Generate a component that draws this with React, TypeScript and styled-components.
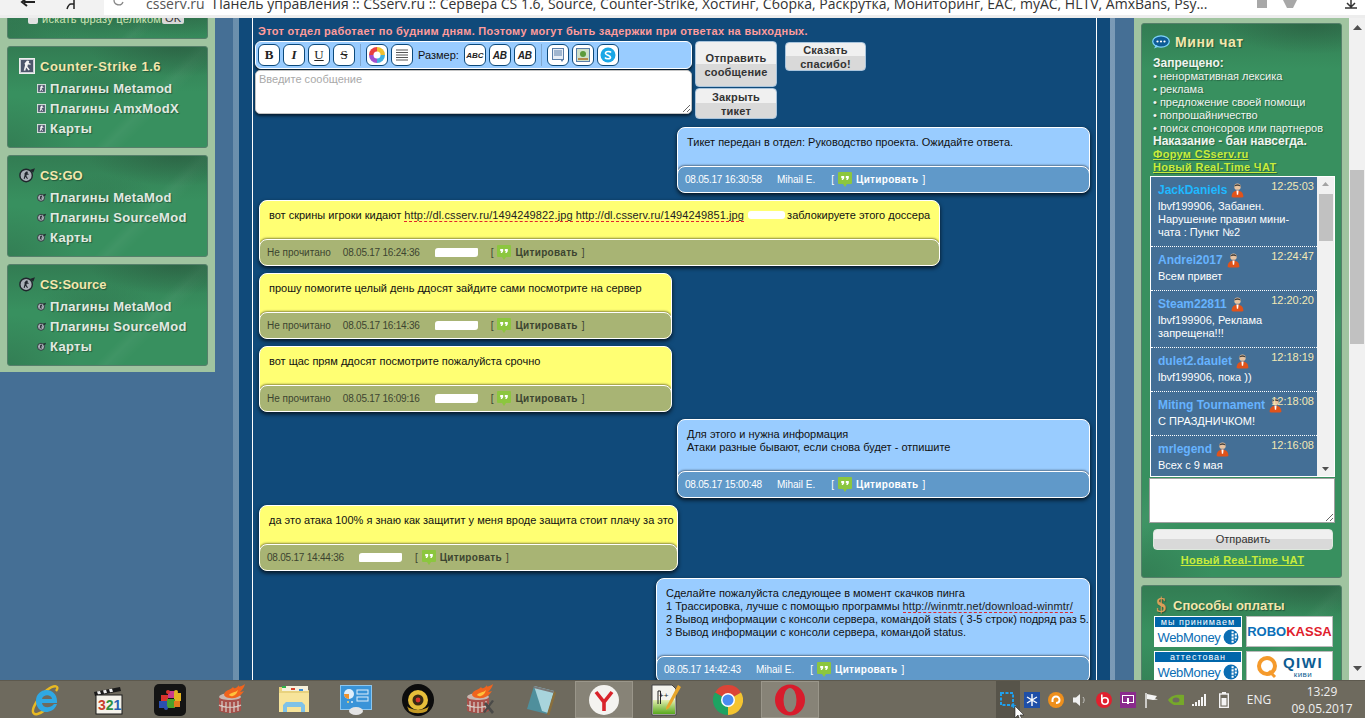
import React from "react";
import styled, { createGlobalStyle } from "styled-components";

const GlobalStyle = createGlobalStyle`
  html, body { margin: 0; padding: 0; height: 718px; overflow: hidden; }
  body { font-family: "Liberation Sans", Arial, sans-serif; font-size: 11px; }
  * { box-sizing: border-box; }
`;

const Screen = styled.div`
  display: flex;
  flex-direction: column;
  width: 1365px;
  height: 718px;
  overflow: hidden;
`;

/* browser bar */
const BrowserBar = styled.div`
  display: flex;
  height: 18px;
  flex: none;
  background: #f2f2f2;
  border-bottom: 3px solid #ededed;
  overflow: hidden;
`;
const NavButtons = styled.div`
  display: flex;
  width: 104px;
  flex: none;
  padding-left: 20px;
  gap: 29px;
`;
const AddressBar = styled.div`
  display: flex;
  flex: 1;
  height: 15px;
  background: #fff;
  padding-left: 8px;
  font-family: "Open Sans", sans-serif;
  font-size: 14px;
  line-height: 8px;
  color: #333;
  white-space: nowrap;
`;
const Domain = styled.span`
  margin-left: 22px;
  margin-right: 8px;
  color: #555;
`;
const PageTitle = styled.span`
  width: 1000px;
  overflow: hidden;
`;
const BarTools = styled.div`
  display: flex;
  margin-left: 42px;
  gap: 14px;
`;

/* page */
const Viewport = styled.div`
  display: flex;
  flex: 1;
  min-height: 0;
  overflow: hidden;
`;
const Page = styled.div`
  display: grid;
  grid-template-columns: 215px 18px 882px 19px 215px;
  width: 1349px;
  align-items: start;
  height: 662px;
  background: #456f95;
`;

const LeftColumn = styled.aside`
  grid-column: 1;
  display: flex;
  flex-direction: column;
  gap: 7px;
  margin-top: -12px;
  padding: 0 7px 6px;
  background: #a0c4a0;
`;
const RightColumn = styled.aside`
  grid-column: 5;
  display: flex;
  flex-direction: column;
  gap: 7px;
  padding: 5px 7px 0;
  min-height: 662px;
  background: #a0c4a0;
`;
const Panel = styled.section`
  border-radius: 3px;
  border: 1px solid #55806a;
  background:
    radial-gradient(ellipse 90px 30px at 85% 0, rgba(40, 85, 60, 0.55), transparent),
    radial-gradient(ellipse 70px 50px at 0 100%, rgba(40, 85, 60, 0.3), transparent),
    radial-gradient(ellipse 60px 24px at 45% 42%, rgba(40, 85, 60, 0.25), transparent),
    linear-gradient(135deg, rgba(255, 255, 255, 0) 62%, rgba(255, 255, 255, 0.04) 66%, rgba(255, 255, 255, 0) 72%),
    linear-gradient(180deg, rgba(44, 100, 68, 0.45), rgba(56, 144, 95, 0) 45px),
    #38905f;
`;
const SearchPanel = styled(Panel)`
  display: flex;
  align-items: center;
  height: 33px;
  padding: 5px 0 13px 20px;
  color: #cfe5b4;
  letter-spacing: 0.25px;
`;
const SearchCheck = styled.span`
  width: 10px;
  height: 10px;
  margin-right: 4px;
  background: #e2e2e2;
  border-radius: 2px;
`;
const SearchOk = styled.span`
  width: 22px;
  height: 11px;
  margin-left: 1px;
  background: #d8d8d8;
  border-radius: 2px;
  color: #333;
  line-height: 11px;
  text-align: center;
`;
const MenuPanel = styled(Panel)`
  height: 102px;
  padding: 11px 0 0 11px;
`;
const PanelTitle = styled.div<{ $spread?: number }>`
  display: flex;
  align-items: center;
  gap: 5px;
  height: 16px;
  font-size: 13px;
  font-weight: bold;
  letter-spacing: ${(p) => p.$spread ?? 0}px;
  color: #f2e7ad;
  text-shadow: 1px 1px 1px rgba(0, 0, 0, 0.35);
`;
const MenuList = styled.div`
  margin-top: 4px;
`;
const MenuItem = styled.div`
  display: flex;
  align-items: center;
  gap: 4px;
  height: 20px;
  padding-left: 18px;
  font-size: 13px;
  font-weight: bold;
  letter-spacing: 0.3px;
  color: #e1eae2;
  text-shadow: 1px 1px 1px rgba(0, 0, 0, 0.35);
`;

/* centre */
const CentreOuter = styled.main`
  grid-column: 3;
  height: 662px;
  padding: 0 5px 0 6px;
  background: linear-gradient(90deg, #6b8fac, #cfd9e1 50%, #7a9ab6);
`;
const CentreInner = styled.div`
  height: 100%;
  padding: 0 13px;
  background: #104a7a;
`;
const Column = styled.div`
  height: 100%;
  padding: 7px 6px 0 2px;
  border-left: 1px solid #fff;
  border-right: 1px solid #fff;
`;
const Notice = styled.div`
  padding-left: 3px;
  line-height: 13px;
  font-weight: bold;
  letter-spacing: 0.3px;
  color: #ff9c9c;
`;
const ComposerRow = styled.div`
  display: flex;
  align-items: flex-start;
  margin-top: 3px;
  gap: 3px;
`;
const Editor = styled.div`
  display: flex;
  flex-direction: column;
  width: 437px;
`;
const Toolbar = styled.div`
  display: flex;
  align-items: center;
  height: 28px;
  padding-left: 2px;
  gap: 3px;
  background: #99ccff;
  border: 1px solid #fff;
  border-radius: 6px;
  box-shadow: 0 2px 3px rgba(0, 0, 0, 0.7);
  font-size: 11px;
  color: #111;
`;
const ToolButton = styled.span`
  display: flex;
  align-items: center;
  justify-content: center;
  width: 22px;
  height: 22px;
  background: #fff;
  border: 1px solid #0c4a7c;
  border-radius: 6px;
  font-family: "Liberation Serif", serif;
  font-size: 13px;
  color: #222;
`;
const ToolSize = styled(ToolButton)<{ $heavy?: boolean }>`
  font-family: "Liberation Sans", sans-serif;
  font-size: ${(p) => (p.$heavy ? "10px" : "8px")};
  font-weight: bold;
  font-style: italic;
`;
const ToolDivider = styled.span`
  width: 1px;
  height: 22px;
  margin: 0 2px;
  background: #7fa8d0;
`;
const SizeLabel = styled.span`
  margin: 0 2px;
`;
const MessageInput = styled.textarea`
  display: block;
  width: 100%;
  height: 44px;
  margin-top: 1px;
  padding: 2px 3px;
  background: #fff;
  border: 1px solid #c4c4c4;
  border-radius: 5px;
  outline: none;
  font-family: "Liberation Sans", sans-serif;
  font-size: 11px;
  box-shadow: 0 2px 3px rgba(0, 0, 0, 0.6);
  &::placeholder { color: #a9a9a9; }
`;
const ActionStack = styled.div`
  display: flex;
  flex-direction: column;
  gap: 1px;
  width: 82px;
`;
const ActionButton = styled.div<{ $height: number }>`
  display: flex;
  align-items: center;
  justify-content: center;
  height: ${(p) => p.$height}px;
  padding-top: 1px;
  border: 1px solid #a9c4dc;
  border-radius: 4px;
  background: linear-gradient(180deg, #f0f0f0 50%, #d9d9d9 50%);
  font-size: 11px;
  line-height: 14px;
  font-weight: bold;
  letter-spacing: 0.2px;
  text-align: center;
  color: #333;
`;
const ThanksButton = styled(ActionButton)`
  width: 81px;
  margin-left: 5px;
  margin-top: 1px;
`;

const MessageList = styled.div`
  display: flex;
  flex-direction: column;
  gap: 7px;
  margin-top: 8px;
  padding-left: 4px;
`;
const Message = styled.article<{ $own: boolean; $width: number }>`
  display: flex;
  flex-direction: column;
  flex: none;
  width: ${(p) => p.$width}px;
  align-self: ${(p) => (p.$own ? "flex-end" : "flex-start")};
  background: ${(p) => (p.$own ? "#99ccff" : "#ffff73")};
  border: 1px solid #fff;
  border-radius: 8px;
  box-shadow: 0 2px 4px rgba(0, 0, 0, 0.75);
  overflow: hidden;
`;
const MessageBody = styled.div`
  padding: 8px 0 17px 9px;
  line-height: 13px;
  white-space: nowrap;
  color: #111;
`;
const MessageLink = styled.span`
  border-bottom: 1px dashed #e0262c;
  letter-spacing: 0.1px;
  color: #222;
`;
const MessageFoot = styled.div<{ $own: boolean }>`
  display: flex;
  align-items: center;
  height: 27px;
  margin: 0 -1px -1px;
  padding: 0 7px;
  border: 1px solid #fff;
  border-radius: 8px;
  background: ${(p) => (p.$own ? "#6099c9" : "#a8b474")};
  box-shadow: 0 -1px 2px rgba(0, 0, 0, 0.45);
  font-size: 10px;
  white-space: nowrap;
  color: ${(p) => (p.$own ? "#fff" : "#3c4430")};
`;
const FootText = styled.span<{ $gap: number }>`
  margin-right: ${(p) => p.$gap}px;
`;
const FootTime = styled(FootText)`
  letter-spacing: -0.22px;
`;
const HiddenName = styled.span`
  width: 43px;
  height: 9px;
  margin-right: 13px;
  background: #fff;
  border-radius: 3px 1px 3px 1px;
`;
const InlineBlot = styled.span`
  display: inline-block;
  width: 37px;
  height: 8px;
  margin: 0 -1px 0 1px;
  background: #fff;
  border-radius: 3px;
`;
const QuoteLink = styled.span`
  display: flex;
  align-items: center;
  gap: 4px;
  b {
    font-weight: bold;
    letter-spacing: 0.3px;
  }
`;

/* chat */
const ChatPanel = styled(Panel)`
  display: flex;
  flex-direction: column;
  padding: 10px 6px 10px 8px;
`;
const ChatRules = styled.div`
  margin-top: 7px;
  padding-left: 3px;
  line-height: 13px;
  color: #f0f5f0;
  text-shadow: 1px 1px 1px rgba(0, 0, 0, 0.3);
`;
const RuleHeading = styled.div`
  font-size: 12px;
  font-weight: bold;
`;
const GreenLink = styled.a`
  display: block;
  font-weight: bold;
  line-height: 13px;
  letter-spacing: 0.3px;
  color: #c8ec3c;
  text-decoration: underline;
`;
const CentredLink = styled(GreenLink)`
  margin-top: 4px;
  text-align: center;
`;
const ChatHeading = styled(PanelTitle)`
  padding-left: 2px;
  font-size: 14px;
`;
const ChatBox = styled.div`
  display: flex;
  height: 301px;
  margin-top: 2px;
  background: #446f96;
  border: 1px solid #fff;
  overflow: hidden;
`;
const ChatList = styled.div`
  flex: 1;
  min-width: 0;
`;
const ChatItem = styled.div`
  position: relative;
  padding: 6px 0 7px 7px;
  border-bottom: 1px dotted #fff;
  line-height: 13px;
  color: #fff;
`;
const ChatName = styled.div<{ $color: string }>`
  display: flex;
  align-items: center;
  gap: 4px;
  height: 14px;
  margin-bottom: 3px;
  font-size: 12px;
  font-weight: bold;
  color: ${(p) => p.$color};
`;
const ChatTime = styled.span`
  position: absolute;
  top: 3px;
  right: 3px;
  color: #f2e8b4;
`;
const ChatScroll = styled.div`
  display: flex;
  flex-direction: column;
  align-items: center;
  justify-content: space-between;
  width: 17px;
  padding: 5px 0;
  background: #f1f1f1;
`;
const ChatThumbWrap = styled.div`
  flex: 1;
  width: 14px;
  padding-top: 8px;
`;
const ChatThumb = styled.div`
  width: 14px;
  height: 47px;
  background: #c1c1c1;
`;
const ChatInput = styled.textarea`
  display: block;
  width: 186px;
  height: 45px;
  margin: 1px 0 0 -1px;
  border: 1px solid #a0a0a0;
  background: #fff;
  outline: none;
`;
const SendButton = styled.div`
  width: 180px;
  height: 21px;
  margin: 6px 0 0 3px;
  border-radius: 4px;
  border: 1px solid #dfe8df;
  background: linear-gradient(180deg, #f0f0f0 50%, #d9d9d9 50%);
  line-height: 19px;
  text-align: center;
  color: #333;
`;

/* payments */
const PayPanel = styled(Panel)`
  padding: 11px 0 0 12px;
  height: 110px;
`;
const DollarMark = styled.span`
  width: 14px;
  padding-left: 2px;
  font-family: "Liberation Serif", serif;
  font-size: 20px;
  line-height: 18px;
  color: #d9a05a;
`;
const PayGrid = styled.div`
  display: grid;
  grid-template-columns: 88px 87px;
  gap: 4px;
  margin-top: 3px;
`;
const PayCard = styled.div`
  display: flex;
  flex-direction: column;
  height: 31px;
  background: #fff;
  overflow: hidden;
`;
const PayHeader = styled.div`
  margin: 1px 1px 0;
  height: 10px;
  background: #0066aa;
  color: #fff;
  font-size: 9px;
  line-height: 10px;
  letter-spacing: 1px;
  text-align: center;
`;
const WebMoneyRow = styled.div`
  display: flex;
  align-items: center;
  justify-content: center;
  gap: 2px;
  flex: 1;
  font-size: 13px;
  letter-spacing: -0.3px;
  color: #0a6db3;
`;
const RoboCard = styled(PayCard)`
  align-items: center;
  justify-content: center;
  border: 1px solid #bbb;
  font-size: 13px;
  font-weight: bold;
  color: #0b6fb8;
  em { color: #e0202c; font-style: normal; }
`;
const QiwiCard = styled(RoboCard)`
  flex-direction: row;
  gap: 5px;
`;
const QiwiMark = styled.div`
  font-size: 15px;
  line-height: 15px;
  letter-spacing: 1.5px;
  text-align: center;
  color: #0d5c92;
`;
const QiwiCaption = styled.div`
  font-size: 8px;
  line-height: 9px;
  font-weight: normal;
  letter-spacing: 0.5px;
`;

/* page scrollbar */
const PageScroll = styled.div`
  display: flex;
  flex-direction: column;
  align-items: center;
  width: 16px;
  height: 662px;
  padding-top: 7px;
  background: #f1f1f1;
`;
const PageThumb = styled.div`
  width: 14px;
  height: 174px;
  margin-top: 140px;
  margin-bottom: auto;
  background: #c1c1c1;
`;
const PageScrollEnd = styled.div`
  margin-bottom: 7px;
`;

/* taskbar */
const Taskbar = styled.footer`
  display: flex;
  align-items: center;
  flex: none;
  height: 38px;
  padding-left: 15px;
  background: #6e6a5e;
  border-top: 1px solid #5d594e;
  color: #f0f0f0;
`;
const TaskSlot = styled.div<{ $active?: boolean }>`
  display: flex;
  align-items: center;
  justify-content: center;
  width: 58px;
  height: 37px;
  margin: 0 2px;
  background: ${(p) => (p.$active ? "#878377" : "transparent")};
  border: ${(p) => (p.$active ? "1px solid #9a968a" : "none")};
`;
const Tray = styled.div`
  display: flex;
  align-items: center;
  margin-left: auto;
  height: 100%;
`;
const TraySlot = styled.div<{ $active?: boolean }>`
  position: relative;
  display: flex;
  align-items: center;
  justify-content: center;
  width: 24px;
  height: 37px;
  background: ${(p) => (p.$active ? "#57544a" : "transparent")};
`;
const CursorMark = styled.svg`
  position: absolute;
  left: 18px;
  top: 25px;
`;
const TrayLang = styled.span`
  width: 44px;
  margin-left: 1px;
  font-family: "Open Sans", sans-serif;
  font-size: 12px;
  text-align: center;
`;
const Clock = styled.div`
  width: 72px;
  margin: 0 7px 0 5px;
  font-family: "Open Sans", sans-serif;
  font-size: 12px;
  line-height: 17px;
  text-align: center;
`;

/* ---------- drawings ---------- */

const CsIcon = ({ size }: { size: number }) => (
  <svg width={size} height={size} viewBox="0 0 16 16">
    <rect x="0.5" y="0.5" width="15" height="15" fill="#c9cdd4" stroke="#eee" />
    <rect x="2" y="2" width="12" height="12" fill="#4d566b" />
    <path d="M8 2.500l2.200.4-.4 2.200 2 .6-.3 1-2.600-.2-.5 2 2.400 3.200-1.300.8-2.300-3-.9 3.200-1.600-.3 1.400-5.400-.6-1.400z" fill="#f4f4f4" />
  </svg>
);

const SourceIcon = ({ size }: { size: number }) => (
  <svg width={size} height={size} viewBox="0 0 18 17">
    <circle cx="8" cy="9" r="7" fill="#aab0b8" stroke="#20252c" strokeWidth="1.600" />
    <path d="M12 3l6-2-2 5z" fill="#20252c" />
    <path d="M8 4.500l2 .4-.4 2 1.400.5-.3.9-2-.2-.4 1.600 1.800 2.600-1 .6-1.900-2.400-.8 2.500-1.200-.3 1.200-4.400-.4-1.200z" fill="#20252c" />
  </svg>
);

const ChatBubbleIcon = () => (
  <svg width="18" height="14" viewBox="0 0 18 14">
    <ellipse cx="9" cy="6.500" rx="8.300" ry="5.600" fill="#0f5c96" stroke="#7fd4ff" strokeWidth="1.200" />
    <path d="M4 10l-2 3.500 5-2z" fill="#7fd4ff" />
    <circle cx="5.500" cy="6.500" r="1.100" fill="#fff" />
    <circle cx="9" cy="6.500" r="1.100" fill="#fff" />
    <circle cx="12.500" cy="6.500" r="1.100" fill="#fff" />
  </svg>
);

const QuoteIcon = () => (
  <svg width="14" height="15" viewBox="0 0 14 15">
    <path d="M1 0h12a1 1 0 0 1 1 1v10a1 1 0 0 1-1 1H9l-2 3-2-3H1a1 1 0 0 1-1-1V1a1 1 0 0 1 1-1z" fill="#8cc63f" />
    <path d="M3.200 4h3v2.200L5 8H3.600l.8-1.800H3.200zM7.800 4h3v2.200L9.600 8H8.200L9 6.200H7.800z" fill="#fff" />
  </svg>
);

const UserIcon = () => (
  <svg width="13" height="15" viewBox="0 0 12 14">
    <circle cx="6" cy="3.400" r="3" fill="#e9c3a0" />
    <path d="M3 3.200c0-2.600 6-2.600 6 0-2-1-4-1-6 0z" fill="#43403c" />
    <path d="M0.500 13c0-4 2.500-6 5.500-6s5.500 2 5.500 6c0 .8-11 .8-11 0z" fill="#e0531b" />
    <path d="M5 7h2l-.4 4h-1.200z" fill="#fff" />
  </svg>
);

const ArrowUp = () => (
  <svg width="9" height="5" viewBox="0 0 9 5"><path d="M0 5l4.500-5 4.500 5z" fill="#505050" /></svg>
);
const ArrowDown = () => (
  <svg width="9" height="5" viewBox="0 0 9 5"><path d="M0 0l4.500 5 4.500-5z" fill="#505050" /></svg>
);
const ChatArrow = ({ up }: { up?: boolean }) => (
  <svg width="7" height="4" viewBox="0 0 7 4"><path d={up ? "M0 4l3.500-4 3.500 4z" : "M0 0l3.500 4 3.500-4z"} fill={up ? "#a3a3a3" : "#505050"} /></svg>
);

const GlobeIcon = () => (
  <svg width="16" height="16" viewBox="0 0 15 15">
    <circle cx="7.500" cy="7.500" r="7" fill="#0a6db3" />
    <path d="M8 2h2v2H8zM11 4h2v2h-2zM8 5h2v2H8zM11 7h2v2h-2zM8 8h2v2H8zM11 10h1v1h-1zM8 11h2v2H8z" fill="#fff" />
  </svg>
);

const IeIcon = () => (
  <svg width="32" height="32" viewBox="0 0 32 32">
    <path d="M26 7C30 2 25 0 17 6 9 12 2 24 3 28c1 4 7 2 12-2" fill="none" stroke="#e8b923" strokeWidth="2.400" />
    <path d="M6 17c0-7 5-11 10.500-11S27 10 27 17v2H12c.5 5 8 6 12 1h3c-2 6-7 8-11 8C10 28 6 23 6 17zm6-2h10c-.5-5-9-5-10 0z" fill="#2fa8e4" />
  </svg>
);

const ClapperIcon = () => (
  <svg width="30" height="30" viewBox="0 0 30 30">
    <path d="M1 7l26-5 1 4-26 5z" fill="#1a1a1a" />
    <path d="M4 6.500l3-.6 1 3-3 .6zM10 5.400l3-.6 1 3-3 .6zM16 4.300l3-.6 1 3-3 .6z" fill="#eee" />
    <rect x="3" y="10" width="26" height="19" fill="#f4f2ea" stroke="#1a1a1a" />
    <text x="5" y="25" fontFamily="Liberation Sans, sans-serif" fontWeight="bold" fontSize="14">
      <tspan fill="#c8402c">3</tspan><tspan fill="#2f8f3e">2</tspan><tspan fill="#2a5fb0">1</tspan>
    </text>
  </svg>
);

const PuzzleIcon = () => (
  <svg width="32" height="32" viewBox="0 0 32 32">
    <rect width="32" height="32" rx="5" fill="#141414" />
    <path d="M7 11h7v7H7z" fill="#d8332c" />
    <path d="M14 7h7v7h-7z" fill="#c93a8c" />
    <path d="M20 9h7v8h-7z" fill="#e3b322" />
    <path d="M5 17h8v7H5z" fill="#2b4fb0" />
    <path d="M13 15h8v9h-8z" fill="#4aa02c" />
    <path d="M20 17h6v6h-6z" fill="#e37a1c" />
    <circle cx="14" cy="8" r="2" fill="#d8332c" />
    <circle cx="22" cy="8" r="2" fill="#e3b322" />
    <circle cx="12" cy="24" r="2" fill="#2b4fb0" />
  </svg>
);

const FirebirdIcon = ({ tools }: { tools?: boolean }) => (
  <svg width="32" height="32" viewBox="0 0 32 32">
    <ellipse cx="14" cy="13" rx="11" ry="4" fill="#c9b7b0" />
    <path d="M3 13v13c0 4 22 4 22 0V13c0 4-22 4-22 0z" fill="#a8504a" />
    <path d="M6 17v10M10 18v10M14 18v11M18 18v10M22 17v10M3 21c4 3 18 3 22 0" stroke="#d8cfc8" strokeWidth="1.200" fill="none" />
    <path d="M8 11C9 5 14 7 17 3c1 2 3 2 6-2-1 3 3 1 6-1-1 4-3 6-5 8 2 0 3-1 4-1-3 5-8 8-14 7-3 0-5-1-6-3z" fill="#f0641e" />
    <path d="M13 11c2-3 6-2 9-5-1 3-2 5-5 6-2 .5-3 0-4-1z" fill="#ffc23c" />
    {tools && <path d="M22 18l8 10-2 2-8-10zM30 17l-9 12-2-1 9-12z" fill="#4a4a48" />}
  </svg>
);

const FolderIcon = () => (
  <svg width="32" height="30" viewBox="0 0 32 30">
    <path d="M1 2h12l2 3h16v22H1z" fill="#e8d27e" />
    <rect x="4" y="1" width="26" height="5" fill="#f6f1dc" />
    <rect x="4" y="1" width="4" height="2" fill="#2fb34a" />
    <rect x="13" y="3" width="4" height="2" fill="#d8442c" />
    <rect x="21" y="4" width="4" height="2" fill="#3c8fd8" />
    <path d="M1 8h30v19H1z" fill="#f7e49a" />
    <path d="M5 27v-7l3-3h16l3 3v7h-4v-5H9v5z" fill="#7ec2e8" />
  </svg>
);

const ControlPanelIcon = () => (
  <svg width="32" height="30" viewBox="0 0 32 30">
    <rect x="0.500" y="0.500" width="31" height="24" fill="#3a94d8" stroke="#8cc6ee" />
    <circle cx="9" cy="9" r="5" fill="#dfeefa" />
    <path d="M9 9V4a5 5 0 0 1 5 5z" fill="#f0922c" transform="rotate(180 9 9)" />
    <rect x="17" y="5" width="11" height="4" fill="none" stroke="#dfeefa" />
    <rect x="17" y="12" width="11" height="4" fill="none" stroke="#dfeefa" />
    <circle cx="8" cy="17" r="1" fill="#f5d56a" />
    <circle cx="12" cy="17" r="1" fill="#dfeefa" />
    <ellipse cx="16" cy="26" rx="7" ry="4" fill="#e4e4e4" />
  </svg>
);

const CamIcon = () => (
  <svg width="32" height="32" viewBox="0 0 32 32">
    <circle cx="16" cy="16" r="16" fill="#0c0c0c" />
    <circle cx="16" cy="16" r="10" fill="#e6be3a" />
    <circle cx="16" cy="16" r="5.500" fill="#3a2a14" />
    <circle cx="16" cy="16" r="2.400" fill="#d8322c" />
    <path d="M5 22c4 5 18 5 22 0l-2 5c-5 3-13 3-18 0z" fill="#c49a26" />
  </svg>
);

const NotepadIcon = () => (
  <svg width="32" height="30" viewBox="0 0 32 30">
    <path d="M8 1l20 5-7 23L1 24z" fill="#4f8f9c" />
    <path d="M8 1l20 5-6 22-6-2z" fill="#a8d4dc" />
    <path d="M28 6l2 2-7 23-2-2z" fill="#8a6f3c" />
    <path d="M8 1l20 5-.6 2L7.500 3z" fill="#7a7a7a" />
  </svg>
);

const YandexIcon = () => (
  <svg width="30" height="30" viewBox="0 0 30 30">
    <circle cx="15" cy="15" r="15" fill="#f4f3f0" />
    <path d="M7 7l8 10 8-10M15 17v9" fill="none" stroke="#d9232b" strokeWidth="3.600" />
  </svg>
);

const NppIcon = () => (
  <svg width="30" height="32" viewBox="0 0 30 32">
    <path d="M1 1h20l4 4v26H1z" fill="#f4f4ee" stroke="#444" />
    <defs>
      <linearGradient id="npp" x1="0" y1="0" x2="0" y2="1">
        <stop offset="0" stopColor="#e4efb0" />
        <stop offset="1" stopColor="#58a81e" />
      </linearGradient>
    </defs>
    <rect x="2" y="16" width="22" height="14" fill="url(#npp)" />
    <text x="8" y="14" fontFamily="Liberation Mono, monospace" fontSize="8" fill="#222">++</text>
    <path d="M7 20V7h2.500v13" fill="none" stroke="#222" />
    <path d="M27 1l3 2L18 24l-3 2 .3-3z" fill="#e8a62c" />
  </svg>
);

const ChromeIcon = () => (
  <svg width="30" height="30" viewBox="0 0 30 30">
    <path d="M15 15L2 7.500A15 15 0 0 1 28 7.500z" fill="#dc4437" />
    <path d="M15 15L28 7.500A15 15 0 0 1 15 30z" fill="#f4c430" />
    <path d="M15 15V30A15 15 0 0 1 2 7.500z" fill="#1ea362" />
    <circle cx="15" cy="15" r="7" fill="#fff" />
    <circle cx="15" cy="15" r="5.500" fill="#4a8cf0" />
  </svg>
);

const OperaIcon = () => (
  <svg width="30" height="32" viewBox="0 0 30 32">
    <ellipse cx="15" cy="16" rx="15" ry="15.500" fill="#d81c2c" />
    <ellipse cx="15" cy="16" rx="6.500" ry="12" fill="#878377" />
  </svg>
);

const CaptureTray = () => (
  <svg width="16" height="16" viewBox="0 0 16 16">
    <rect x="1" y="1" width="12" height="12" fill="none" stroke="#1ea0f0" strokeWidth="2" strokeDasharray="3 1.500" />
    <path d="M11 14h5M13.500 11.500v5" stroke="#1ea0f0" strokeWidth="1.500" />
  </svg>
);
const SnowTray = () => (
  <svg width="16" height="16" viewBox="0 0 16 16">
    <rect width="16" height="16" fill="#1f4fa8" />
    <path d="M8 2v12M3 5l10 6M13 5L3 11" stroke="#fff" strokeWidth="1.400" />
  </svg>
);
const OrangeTray = () => (
  <svg width="16" height="16" viewBox="0 0 16 16">
    <circle cx="8" cy="8" r="8" fill="#ee8f1c" />
    <path d="M4.500 10V8a3.500 3.500 0 0 1 7 0c0 2-1.500 3-3.500 3" fill="none" stroke="#fff" strokeWidth="2" />
  </svg>
);
const SpeakerTray = () => (
  <svg width="16" height="16" viewBox="0 0 16 16">
    <path d="M1 5.500h3L8 2v12L4 10.500H1z" fill="#f0f0f0" />
    <path d="M11 5c1.500 2 1.500 4 0 6" fill="none" stroke="#c4c4c0" />
  </svg>
);
const BeatsTray = () => (
  <svg width="16" height="16" viewBox="0 0 16 16">
    <circle cx="8" cy="8" r="8" fill="#e0202e" />
    <circle cx="9" cy="9" r="3.200" fill="none" stroke="#fff" strokeWidth="1.600" />
    <path d="M5.800 2.500v6.500" stroke="#fff" strokeWidth="1.600" />
  </svg>
);
const PurpleTray = () => (
  <svg width="16" height="16" viewBox="0 0 16 16">
    <rect width="16" height="16" fill="#8a2a8c" />
    <rect x="2.500" y="3.500" width="11" height="7" fill="none" stroke="#fff" />
    <path d="M7 6h2v6H7z" fill="#fff" />
  </svg>
);
const FlagTray = () => (
  <svg width="16" height="16" viewBox="0 0 16 16">
    <path d="M2 1v15" stroke="#f4f4f4" strokeWidth="1.400" />
    <path d="M3 2l5 1 5 1-2 2.500 3 1-5 .5-6-1z" fill="#f4f4f4" />
  </svg>
);
const NvidiaTray = () => (
  <svg width="16" height="12" viewBox="0 0 16 12">
    <path d="M0 6c3-5 9-6 16-5v10H6C4 10 2 9 0 6z" fill="#76a82a" />
    <ellipse cx="8" cy="6" rx="3.500" ry="2.500" fill="#6e6a5e" />
  </svg>
);
const SignalTray = () => (
  <svg width="16" height="12" viewBox="0 0 16 12">
    <path d="M0 10h2v2H0zM3 8h2v4H3zM6 6h2v6H6zM9 3h2v9H9zM12 0h2v12h-2z" fill="#f4f4f4" />
  </svg>
);
const BatteryTray = () => (
  <svg width="10" height="16" viewBox="0 0 10 16">
    <rect x="0.700" y="2" width="8.600" height="13.300" fill="none" stroke="#f4f4f4" strokeWidth="1.400" />
    <rect x="3" y="0" width="4" height="2" fill="#f4f4f4" />
    <rect x="2.500" y="6" width="5" height="7.500" fill="#f4f4f4" />
  </svg>
);

/* ---------- data ---------- */

type MessageData = {
  own: boolean;
  width: number;
  lines: React.ReactNode[];
  time: string;
  unread?: boolean;
};

const messages: MessageData[] = [
  {
    own: true,
    width: 413,
    lines: ["Тикет передан в отдел: Руководство проекта. Ожидайте ответа."],
    time: "08.05.17 16:30:58",
  },
  {
    own: false,
    width: 681,
    unread: true,
    lines: [
      <>
        вот скрины игроки кидают <MessageLink>http://dl.csserv.ru/1494249822.jpg</MessageLink>{" "}
        <MessageLink>http://dl.csserv.ru/1494249851.jpg</MessageLink> <InlineBlot /> заблокируете этого доссера
      </>,
    ],
    time: "08.05.17 16:24:36",
  },
  {
    own: false,
    width: 413,
    unread: true,
    lines: ["прошу помогите целый день ддосят зайдите сами посмотрите на сервер"],
    time: "08.05.17 16:14:36",
  },
  {
    own: false,
    width: 413,
    unread: true,
    lines: ["вот щас прям ддосят посмотрите пожалуйста срочно"],
    time: "08.05.17 16:09:16",
  },
  {
    own: true,
    width: 413,
    lines: ["Для этого и нужна информация", "Атаки разные бывают, если снова будет - отпишите"],
    time: "08.05.17 15:00:48",
  },
  {
    own: false,
    width: 419,
    lines: ["да это атака 100% я знаю как защитит у меня вроде защита стоит плачу за это"],
    time: "08.05.17 14:44:36",
  },
  {
    own: true,
    width: 434,
    lines: [
      "Сделайте пожалуйста следующее в момент скачков пинга",
      <>
        1 Трассировка, лучше с помощью программы{" "}
        <MessageLink>http://winmtr.net/download-winmtr/</MessageLink>
      </>,
      "2 Вывод информации с консоли сервера, командой stats ( 3-5 строк) подряд раз 5.",
      "3 Вывод информации с консоли сервера, командой status.",
    ],
    time: "08.05.17 14:42:43",
  },
];

const chat = [
  { name: "JackDaniels", color: "#1fb8ff", time: "12:25:03", text: ["lbvf199906, Забанен.", "Нарушение правил мини-", "чата : Пункт №2"] },
  { name: "Andrei2017", color: "#66b3ff", time: "12:24:47", text: ["Всем привет"] },
  { name: "Steam22811", color: "#66b3ff", time: "12:20:20", text: ["lbvf199906, Реклама", "запрещена!!!"] },
  { name: "dulet2.daulet", color: "#66b3ff", time: "12:18:19", text: ["lbvf199906, пока ))"] },
  { name: "Miting Tournament", color: "#66b3ff", time: "12:18:08", text: ["С ПРАЗДНИЧКОМ!"] },
  { name: "mrlegend", color: "#66b3ff", time: "12:16:08", text: ["Всех с 9 мая"] },
];

const menus = [
  { title: "Counter-Strike 1.6", cs: true, spread: 0.5, items: ["Плагины Metamod", "Плагины AmxModX", "Карты"] },
  { title: "CS:GO", cs: false, spread: 0, items: ["Плагины MetaMod", "Плагины SourceMod", "Карты"] },
  { title: "CS:Source", cs: false, spread: 0, items: ["Плагины MetaMod", "Плагины SourceMod", "Карты"] },
];

const taskIcons: { icon: React.ReactNode; active?: boolean }[] = [
  { icon: <IeIcon /> },
  { icon: <ClapperIcon /> },
  { icon: <PuzzleIcon /> },
  { icon: <FirebirdIcon /> },
  { icon: <FolderIcon /> },
  { icon: <ControlPanelIcon /> },
  { icon: <CamIcon /> },
  { icon: <FirebirdIcon tools /> },
  { icon: <NotepadIcon /> },
  { icon: <YandexIcon />, active: true },
  { icon: <NppIcon /> },
  { icon: <ChromeIcon /> },
  { icon: <OperaIcon />, active: true },
];

const trayIcons = [
  <SnowTray key="snow" />,
  <OrangeTray key="orange" />,
  <SpeakerTray key="speaker" />,
  <BeatsTray key="beats" />,
  <PurpleTray key="purple" />,
  <FlagTray key="flag" />,
  <NvidiaTray key="nvidia" />,
  <SignalTray key="signal" />,
  <BatteryTray key="battery" />,
];

export default function App() {
  return (
    <Screen>
      <GlobalStyle />
      <BrowserBar>
        <NavButtons>
          <svg width="16" height="10" viewBox="0 0 16 10">
            <path d="M15 2H4M7-2L2 2l5 4" fill="none" stroke="#222" strokeWidth="2" />
          </svg>
          <svg width="12" height="10" viewBox="0 0 12 10">
            <path d="M9 0v9M9 4H6C4 4 3 6 2 9" fill="none" stroke="#222" strokeWidth="1.500" />
          </svg>
        </NavButtons>
        <AddressBar>
          <svg width="12" height="8" viewBox="0 0 12 8">
            <path d="M2 0c0 5 7 7 9 2" fill="none" stroke="#888" strokeWidth="1.300" />
          </svg>
          <Domain>csserv.ru</Domain>
          <PageTitle>
            Панель управления :: CSserv.ru :: Сервера CS 1.6, Source, Counter-Strike, Хостинг, Сборка, Раскрутка, Мониторинг, EAC, myAC, HLTV, AmxBans, Psy...
          </PageTitle>
          <BarTools>
            <svg width="14" height="10" viewBox="0 0 14 10"><rect x="2" width="10" height="8" fill="#a8a8a8" /></svg>
            <svg width="14" height="10" viewBox="0 0 14 10"><path d="M0 0h14L10 8H4z" fill="#a8a8a8" /></svg>
            <svg width="60" height="10" viewBox="0 0 60 10"><path d="M40 0v6M36 3l4 4 4-4M34 8h12" fill="none" stroke="#333" strokeWidth="1.500" /></svg>
          </BarTools>
        </AddressBar>
      </BrowserBar>

      <Viewport>
        <Page>
          <LeftColumn>
            <SearchPanel>
              <SearchCheck />
              искать фразу целиком
              <SearchOk>OK</SearchOk>
            </SearchPanel>
            {menus.map((menu) => (
              <MenuPanel key={menu.title}>
                <PanelTitle $spread={menu.spread}>
                  {menu.cs ? <CsIcon size={16} /> : <SourceIcon size={16} />}
                  {menu.title}
                </PanelTitle>
                <MenuList>
                  {menu.items.map((item) => (
                    <MenuItem key={item}>
                      {menu.cs ? <CsIcon size={9} /> : <SourceIcon size={9} />}
                      {item}
                    </MenuItem>
                  ))}
                </MenuList>
              </MenuPanel>
            ))}
          </LeftColumn>

          <CentreOuter>
            <CentreInner>
              <Column>
                <Notice>Этот отдел работает по будним дням. Поэтому могут быть задержки при ответах на выходных.</Notice>
                <ComposerRow>
                  <Editor>
                    <Toolbar>
                      <ToolButton><b>B</b></ToolButton>
                      <ToolButton><b><i>I</i></b></ToolButton>
                      <ToolButton><u>U</u></ToolButton>
                      <ToolButton><s>S</s></ToolButton>
                      <ToolDivider />
                      <ToolButton>
                        <svg width="16" height="16" viewBox="0 0 16 16">
                          <path d="M8 8V0a8 8 0 0 1 8 8z" fill="#f0c030" />
                          <path d="M8 8h8a8 8 0 0 1-8 8z" fill="#40b0e0" />
                          <path d="M8 8v8a8 8 0 0 1-8-8z" fill="#a050d0" />
                          <path d="M8 8H0a8 8 0 0 1 8-8z" fill="#e84040" />
                          <circle cx="8" cy="8" r="3.500" fill="#fff" />
                        </svg>
                      </ToolButton>
                      <ToolButton>
                        <svg width="12" height="12" viewBox="0 0 12 12">
                          <path d="M0 1h12M0 3.500h12M0 6h12M0 8.500h12M0 11h12" stroke="#555" />
                        </svg>
                      </ToolButton>
                      <SizeLabel>Размер:</SizeLabel>
                      <ToolSize>ABC</ToolSize>
                      <ToolSize $heavy>AB</ToolSize>
                      <ToolSize $heavy>AB</ToolSize>
                      <ToolDivider />
                      <ToolButton>
                        <svg width="12" height="14" viewBox="0 0 12 14">
                          <rect x="0.500" y="0.500" width="11" height="11" fill="#e8eef6" stroke="#5a7ea8" />
                          <path d="M2 3h8M2 5h8M2 7h8" stroke="#5a7ea8" />
                          <path d="M8 11h4l-2 3z" fill="#5a7ea8" />
                        </svg>
                      </ToolButton>
                      <ToolButton>
                        <svg width="14" height="14" viewBox="0 0 14 14">
                          <rect x="0.500" y="0.500" width="13" height="13" fill="#cfe0c8" stroke="#5a7ea8" />
                          <circle cx="7" cy="6" r="3" fill="#5c9a3a" />
                          <rect x="2" y="10" width="10" height="2" fill="#b48a4a" />
                        </svg>
                      </ToolButton>
                      <ToolButton>
                        <svg width="16" height="16" viewBox="0 0 16 16">
                          <circle cx="8" cy="8" r="7.500" fill="#19a7e6" />
                          <path d="M11 5.500C10 4 6 4 5.500 6c-.5 2.500 5 2 5 4.200 0 2-4.500 2-5.500.3" fill="none" stroke="#fff" strokeWidth="1.600" />
                        </svg>
                      </ToolButton>
                    </Toolbar>
                    <MessageInput placeholder="Введите сообщение" />
                  </Editor>
                  <ActionStack>
                    <ActionButton $height={46}>Отправить<br />сообщение</ActionButton>
                    <ActionButton $height={31}>Закрыть<br />тикет</ActionButton>
                  </ActionStack>
                  <ThanksButton $height={29}>Сказать<br />спасибо!</ThanksButton>
                </ComposerRow>

                <MessageList>
                  {messages.map((m) => (
                    <Message key={m.time} $own={m.own} $width={m.width}>
                      <MessageBody>
                        {m.lines.map((line, i) => (
                          <div key={i}>{line}</div>
                        ))}
                      </MessageBody>
                      <MessageFoot $own={m.own}>
                        {m.unread && <FootText $gap={12}>Не прочитано</FootText>}
                        <FootTime $gap={m.own ? 15 : 15}>{m.time}</FootTime>
                        {m.own ? <FootText $gap={16}>Mihail E.</FootText> : <HiddenName />}
                        <QuoteLink>
                          [ <QuoteIcon /> <b>Цитировать</b> ]
                        </QuoteLink>
                      </MessageFoot>
                    </Message>
                  ))}
                </MessageList>
              </Column>
            </CentreInner>
          </CentreOuter>

          <RightColumn>
            <ChatPanel>
              <ChatHeading $spread={0.6}>
                <ChatBubbleIcon />
                Мини чат
              </ChatHeading>
              <ChatRules>
                <RuleHeading>Запрещено:</RuleHeading>
                <div>• ненормативная лексика</div>
                <div>• реклама</div>
                <div>• предложение своей помощи</div>
                <div>• попрошайничество</div>
                <div>• поиск спонсоров или партнеров</div>
                <RuleHeading>Наказание - бан навсегда.</RuleHeading>
                <GreenLink>Форум CSserv.ru</GreenLink>
                <GreenLink>Новый Real-Time ЧАТ</GreenLink>
              </ChatRules>
              <ChatBox>
                <ChatList>
                  {chat.map((c) => (
                    <ChatItem key={c.name}>
                      <ChatName $color={c.color}>
                        {c.name}
                        <UserIcon />
                      </ChatName>
                      <ChatTime>{c.time}</ChatTime>
                      {c.text.map((t) => (
                        <div key={t}>{t}</div>
                      ))}
                    </ChatItem>
                  ))}
                </ChatList>
                <ChatScroll>
                  <ChatArrow up />
                  <ChatThumbWrap>
                    <ChatThumb />
                  </ChatThumbWrap>
                  <ChatArrow />
                </ChatScroll>
              </ChatBox>
              <ChatInput />
              <SendButton>Отправить</SendButton>
              <CentredLink>Новый Real-Time ЧАТ</CentredLink>
            </ChatPanel>

            <PayPanel>
              <PanelTitle>
                <DollarMark>$</DollarMark>
                Способы оплаты
              </PanelTitle>
              <PayGrid>
                <PayCard>
                  <PayHeader>мы принимаем</PayHeader>
                  <WebMoneyRow>WebMoney <GlobeIcon /></WebMoneyRow>
                </PayCard>
                <RoboCard>
                  <span>ROBO<em>KASSA</em></span>
                </RoboCard>
                <PayCard>
                  <PayHeader>аттестован</PayHeader>
                  <WebMoneyRow>WebMoney <GlobeIcon /></WebMoneyRow>
                </PayCard>
                <QiwiCard>
                  <svg width="22" height="24" viewBox="0 0 22 24">
                    <circle cx="11" cy="11" r="8" fill="none" stroke="#f59a2c" strokeWidth="4" />
                    <path d="M13 16l6 6" stroke="#f59a2c" strokeWidth="3" />
                  </svg>
                  <QiwiMark>
                    QIWI
                    <QiwiCaption>киви</QiwiCaption>
                  </QiwiMark>
                </QiwiCard>
              </PayGrid>
            </PayPanel>
          </RightColumn>
        </Page>
        <PageScroll>
          <ArrowUp />
          <PageThumb />
          <PageScrollEnd>
            <ArrowDown />
          </PageScrollEnd>
        </PageScroll>
      </Viewport>

      <Taskbar>
        {taskIcons.map((t, i) => (
          <TaskSlot key={i} $active={t.active}>
            {t.icon}
          </TaskSlot>
        ))}
        <Tray>
          <TraySlot $active>
            <CaptureTray />
            <CursorMark width="14" height="14" viewBox="0 0 14 14">
              <path d="M1 0v12l3-3 2 5 2-1-2-4h4z" fill="#fff" stroke="#222" strokeWidth="0.600" />
            </CursorMark>
          </TraySlot>
          {trayIcons.map((icon, i) => (
            <TraySlot key={i}>{icon}</TraySlot>
          ))}
          <TrayLang>ENG</TrayLang>
          <Clock>
            13:29
            <br />
            09.05.2017
          </Clock>
        </Tray>
      </Taskbar>
    </Screen>
  );
}
